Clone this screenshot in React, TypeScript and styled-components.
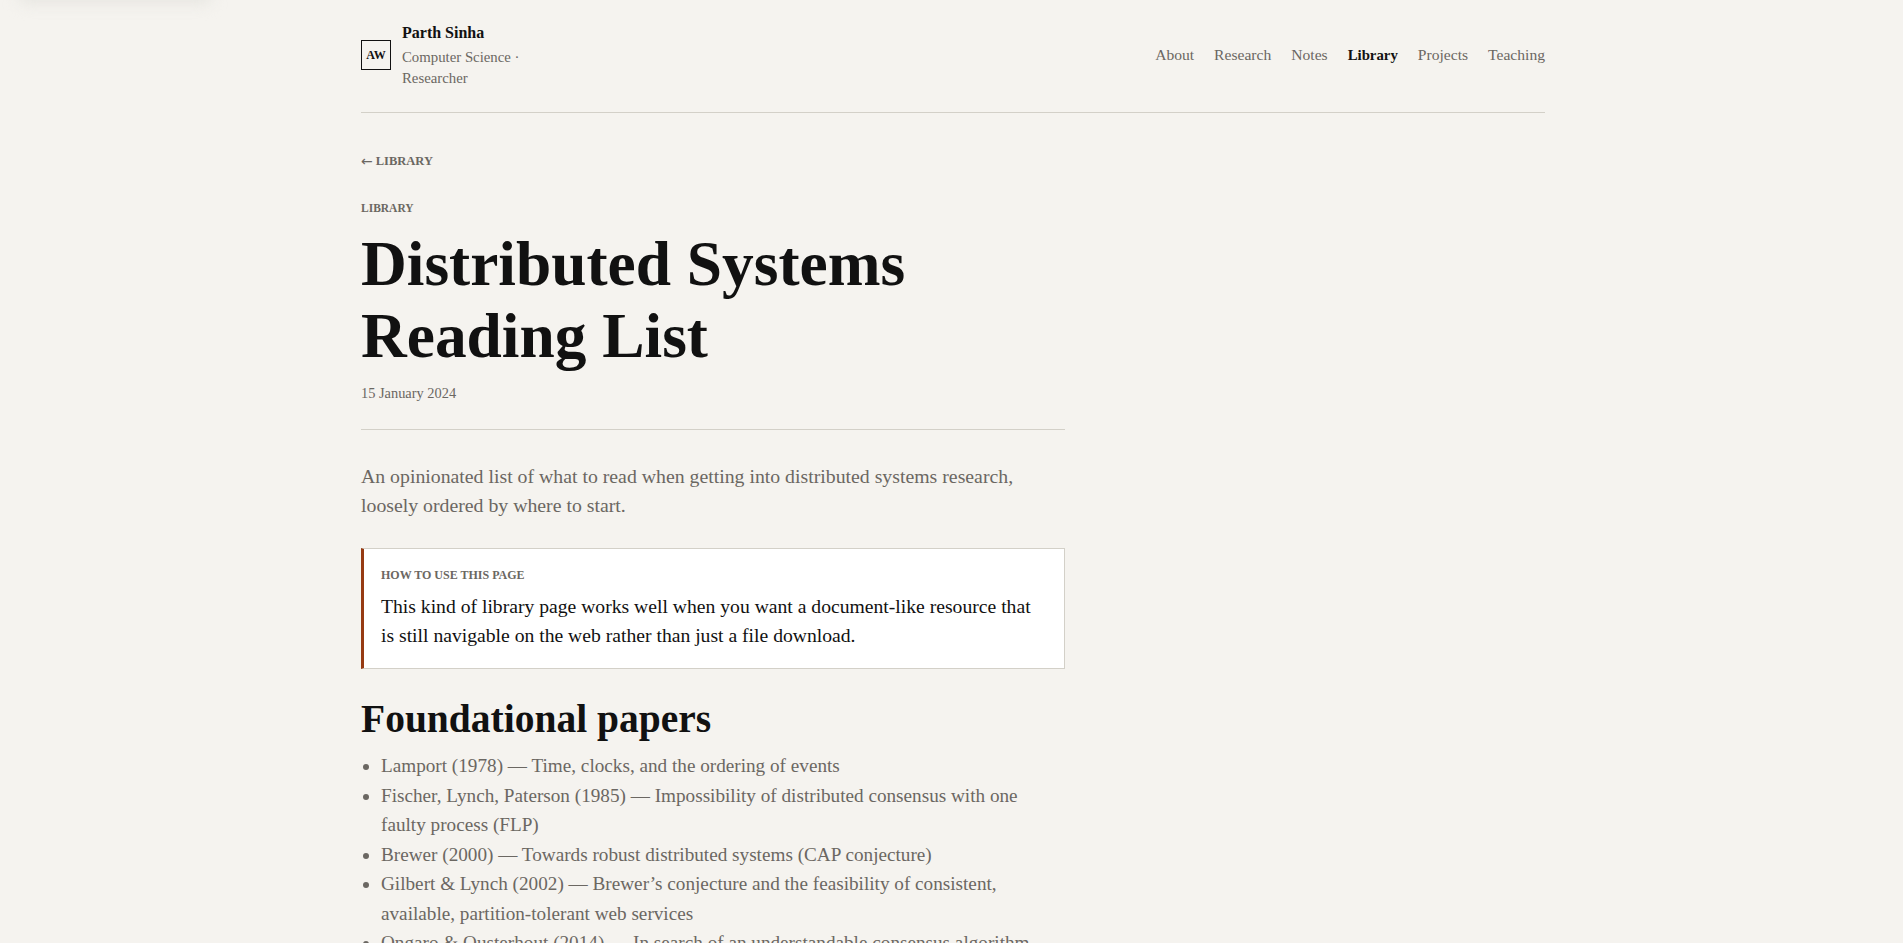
import styled, { createGlobalStyle } from 'styled-components';

const navItems = ['About', 'Research', 'Notes', 'Library', 'Projects', 'Teaching'];

const papers = [
  'Lamport (1978) — Time, clocks, and the ordering of events',
  'Fischer, Lynch, Paterson (1985) — Impossibility of distributed consensus with one faulty process (FLP)',
  'Brewer (2000) — Towards robust distributed systems (CAP conjecture)',
  'Gilbert & Lynch (2002) — Brewer’s conjecture and the feasibility of consistent, available, partition-tolerant web services',
  'Ongaro & Ousterhout (2014) — In search of an understandable consensus algorithm (Raft)',
];

const App = () => {
  return (
    <>
      <GlobalStyle />
      <TopGlow />
      <Page>
        <Header>
          <Brand>
            <Logo>AW</Logo>
            <BrandText>
              <BrandName>Parth Sinha</BrandName>
              <BrandRole>Computer Science · Researcher</BrandRole>
            </BrandText>
          </Brand>
          <Nav>
            {navItems.map((item) => (
              <NavLink key={item} href="#" $active={item === 'Library'}>
                {item}
              </NavLink>
            ))}
          </Nav>
        </Header>

        <Article>
          <BackLink href="#">
            <BackArrow>←</BackArrow>
            LIBRARY
          </BackLink>
          <Eyebrow>LIBRARY</Eyebrow>
          <Title>Distributed Systems Reading List</Title>
          <DateLine>15 January 2024</DateLine>
          <Divider />
          <Lead>
            An opinionated list of what to read when getting into distributed systems research,
            loosely ordered by where to start.
          </Lead>
          <Callout>
            <CalloutLabel>HOW TO USE THIS PAGE</CalloutLabel>
            <CalloutBody>
              This kind of library page works well when you want a document-like resource that is
              still navigable on the web rather than just a file download.
            </CalloutBody>
          </Callout>
          <SectionTitle>Foundational papers</SectionTitle>
          <PaperList>
            {papers.map((paper) => (
              <li key={paper}>{paper}</li>
            ))}
          </PaperList>
        </Article>
      </Page>
    </>
  );
};

export default App;

const GlobalStyle = createGlobalStyle`
  * {
    box-sizing: border-box;
  }

  html, body {
    margin: 0;
    height: 100%;
    overflow: hidden;
    background: #f5f3ef;
  }

  body {
    font-family: "Liberation Serif", "DejaVu Serif", serif;
    color: #111111;
  }
`;

const TopGlow = styled.div`
  position: absolute;
  top: -14px;
  left: 20px;
  width: 190px;
  height: 16px;
  background: #e4e3de;
  filter: blur(8px);
`;

const Page = styled.div`
  width: 1184px;
  margin-left: 361px;
`;

const Header = styled.header`
  display: flex;
  align-items: center;
  justify-content: space-between;
  height: 113px;
  padding-bottom: 2px;
  border-bottom: 1px solid #d3d0c8;
`;

const Brand = styled.div`
  display: flex;
  align-items: center;
  gap: 11px;
`;

const Logo = styled.div`
  display: flex;
  align-items: center;
  justify-content: center;
  width: 30px;
  height: 30px;
  border: 1.5px solid #111111;
  font-size: 12px;
  font-weight: 700;
`;

const BrandText = styled.div`
  width: 125px;
`;

const BrandName = styled.div`
  font-size: 16px;
  font-weight: 700;
  line-height: 24px;
`;

const BrandRole = styled.div`
  margin-top: 2px;
  font-size: 14.8px;
  line-height: 21.2px;
  color: #6b6762;
`;

const Nav = styled.nav`
  display: flex;
  gap: 20px;
`;

const NavLink = styled.a<{ $active?: boolean }>`
  font-size: ${({ $active }) => ($active ? '14.8px' : '15.6px')};
  line-height: 20px;
  font-weight: ${({ $active }) => ($active ? 700 : 400)};
  color: ${({ $active }) => ($active ? '#111111' : '#6b6762')};
  text-decoration: none;
`;

const Article = styled.main`
  width: 704px;
  padding-top: 38px;
`;

const BackLink = styled.a`
  display: flex;
  align-items: center;
  gap: 3px;
  font-size: 12.5px;
  font-weight: 700;
  line-height: 20px;
  color: #6b6762;
  text-decoration: none;
`;

const BackArrow = styled.span`
  font-family: "DejaVu Sans", sans-serif;
  font-size: 14px;
  font-weight: 400;
`;

const Eyebrow = styled.div`
  margin-top: 27px;
  font-size: 11.5px;
  font-weight: 700;
  line-height: 20px;
  color: #6b6762;
`;

const Title = styled.h1`
  width: 640px;
  margin: 10px 0 0;
  font-size: 63.4px;
  font-weight: 700;
  line-height: 72px;
  color: #111111;
`;

const DateLine = styled.div`
  margin-top: 11px;
  font-size: 14.4px;
  line-height: 20px;
  color: #6b6762;
`;

const Divider = styled.hr`
  margin: 26px 0 0;
  border: 0;
  border-top: 1px solid #d3d0c8;
`;

const Lead = styled.p`
  margin: 32px 0 0;
  font-size: 19.8px;
  line-height: 29.44px;
  color: #6b6762;
`;

const Callout = styled.aside`
  margin-top: 27px;
  padding: 16px 20px 16px 17px;
  height: 121px;
  background: #ffffff;
  border: 1px solid #d3d0c8;
  border-left: 3px solid #963a12;
`;

const CalloutLabel = styled.div`
  font-size: 12px;
  font-weight: 700;
  line-height: 20px;
  color: #6b6762;
`;

const CalloutBody = styled.p`
  margin: 7px 0 0;
  font-size: 19.65px;
  line-height: 29.44px;
  color: #111111;
`;

const SectionTitle = styled.h2`
  margin: 27px 0 0;
  font-size: 39.5px;
  font-weight: 700;
  line-height: 46px;
  color: #111111;
`;

const PaperList = styled.ul`
  margin: 9.5px 0 0;
  padding: 0 12px 0 20px;
  font-size: 19.2px;
  line-height: 29.44px;
  color: #6b6762;
`;
